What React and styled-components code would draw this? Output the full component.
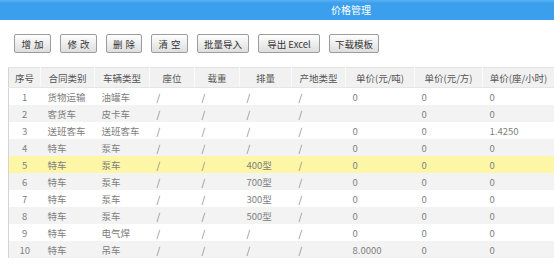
import React from 'react';
import styled, { createGlobalStyle } from 'styled-components';

const fontFamily = `"Noto Sans CJK SC", "Liberation Sans", sans-serif`;

const GlobalStyle = createGlobalStyle`
  body {
    margin: 0;
    background: #fff;
    font-family: ${fontFamily};
  }
`;

const Page = styled.div`
  width: 554px;
  height: 264px;
  overflow: hidden;
  background: #fff;
`;

const TitleBar = styled.div`
  height: 20px;
  background: linear-gradient(#5ab2f4 0, #3c9fee 3px, #3c9fee 100%);
  color: #fff;
  font-size: 10px;
  line-height: 20px;
  padding-left: 331px;
`;

const Toolbar = styled.div`
  display: flex;
  gap: 9px;
  padding: 14px 0 0 14px;
  height: 19px;
`;

const Button = styled.button`
  height: 19px;
  width: ${(p) => p.$w}px;
  padding: 0;
  border: 1px solid #9c9c9c;
  border-radius: 2px;
  background: linear-gradient(#fefefe, #dedede);
  font-family: ${fontFamily};
  font-size: 9.5px;
  color: #333;
  letter-spacing: ${(p) => (p.$spaced ? '3px' : '0')};
  text-indent: ${(p) => (p.$spaced ? '3px' : '0')};
`;

const Table = styled.table`
  margin: 14px 0 0 8px;
  border-collapse: collapse;
  table-layout: fixed;
  width: 546px;
  border-left: 1px solid #d4d4d4;
  font-size: 9.5px;
`;

const HeadCell = styled.th`
  height: 19px;
  padding: 0;
  font-weight: normal;
  color: #555;
  background: #f1f1f1;
  border-top: 1px solid #e2e2e2;
  border-bottom: 1px solid #e6e6e6;
  border-right: 1px solid #fafafa;
  text-align: center;
  white-space: nowrap;
`;

const Row = styled.tr`
  background: ${(p) => (p.$active ? '#fdf6a6' : p.$even ? '#f3f3f3' : '#fff')};
`;

const Cell = styled.td`
  height: 17px;
  padding: 0 0 0 ${(p) => (p.$center ? '0' : '7px')};
  color: #808080;
  text-align: ${(p) => (p.$center ? 'center' : 'left')};
  white-space: nowrap;
`;

const columns = [
  ['序号', 32],
  ['合同类别', 54],
  ['车辆类型', 55],
  ['座位', 45],
  ['载重', 45],
  ['排量', 52],
  ['产地类型', 54],
  ['单价(元/吨)', 69],
  ['单价(元/方)', 68],
  ['单价(座/小时)', 72],
];

const rows = [
  ['1', '货物运输', '油罐车', '/', '/', '/', '/', '0', '0', '0'],
  ['2', '客货车', '皮卡车', '/', '/', '/', '/', '', '0', '0'],
  ['3', '送班客车', '送班客车', '/', '/', '/', '/', '0', '0', '1.4250'],
  ['4', '特车', '泵车', '/', '/', '/', '/', '0', '0', '0'],
  ['5', '特车', '泵车', '/', '/', '400型', '/', '0', '0', '0'],
  ['6', '特车', '泵车', '/', '/', '700型', '/', '0', '0', '0'],
  ['7', '特车', '泵车', '/', '/', '300型', '/', '0', '0', '0'],
  ['8', '特车', '泵车', '/', '/', '500型', '/', '0', '0', '0'],
  ['9', '特车', '电气焊', '/', '/', '/', '/', '0', '0', '0'],
  ['10', '特车', '吊车', '/', '/', '/', '/', '8.0000', '0', '0'],
];

const buttons = [
  ['增加', 37, true],
  ['修改', 37, true],
  ['删除', 36, true],
  ['清空', 37, true],
  ['批量导入', 52, false],
  ['导出 Excel', 62, false],
  ['下载模板', 50, false],
];

const App = () => (
  <Page>
    <GlobalStyle />
    <TitleBar>价格管理</TitleBar>
    <Toolbar>
      {buttons.map(([label, w, spaced]) => (
        <Button key={label} $w={w} $spaced={spaced}>
          {label}
        </Button>
      ))}
    </Toolbar>
    <Table>
      <colgroup>
        {columns.map(([name, w]) => (
          <col key={name} style={{ width: w }} />
        ))}
      </colgroup>
      <thead>
        <tr>
          {columns.map(([name]) => (
            <HeadCell key={name}>{name}</HeadCell>
          ))}
        </tr>
      </thead>
      <tbody>
        {rows.map((row, i) => (
          <Row key={row[0]} $even={i % 2 === 1} $active={i === 4}>
            {row.map((value, j) => (
              <Cell key={j} $center={j === 0}>
                {value}
              </Cell>
            ))}
          </Row>
        ))}
      </tbody>
    </Table>
  </Page>
);

export default App;
